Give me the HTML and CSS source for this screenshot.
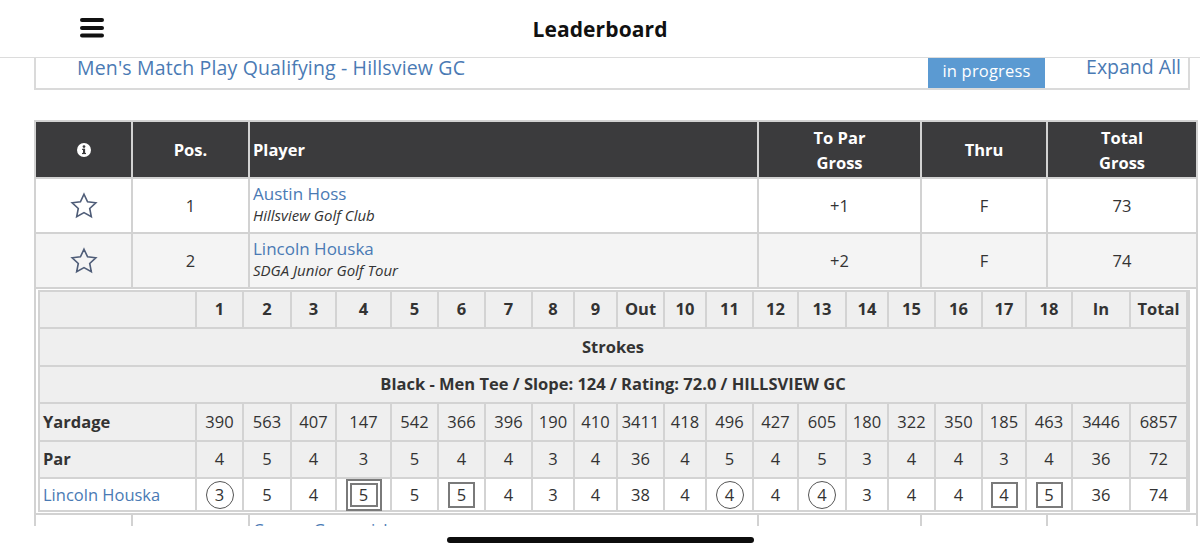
FILE: index.html
```html
<!DOCTYPE html>
<html lang="en">
<head>
<meta charset="utf-8">
<title>Leaderboard</title>
<link rel="stylesheet" href="styles.css">
</head>
<body>
<header class="topbar">
  <div class="topbar-left">
    <button class="menu-btn" aria-label="Menu">
      <svg width="24" height="20" viewBox="0 0 24 20"><rect x="0" y="0" width="24" height="4" rx="2"/><rect x="0" y="8" width="24" height="4" rx="2"/><rect x="0" y="15.5" width="24" height="4" rx="2"/></svg>
    </button>
  </div>
  <h1 class="page-title">Leaderboard</h1>
  <div class="topbar-right"></div>
</header>

<main class="content">
  <div class="event-bar">
    <a class="event-name" href="#">Men's Match Play Qualifying - Hillsview GC</a>
    <span class="status">in progress</span>
    <a class="expand" href="#">Expand All</a>
  </div>

  <table class="board">
    <colgroup>
      <col class="col-icon"><col class="col-pos"><col class="col-player"><col class="col-topar"><col class="col-thru"><col class="col-total">
    </colgroup>
    <thead>
      <tr>
        <th class="c">
          <svg class="info" width="14" height="14" viewBox="0 0 14 14"><circle cx="7" cy="7" r="7" fill="#fff"/><circle cx="7" cy="3.6" r="1.35" fill="#3b3b3d"/><rect x="6" y="5.8" width="2.1" height="5" fill="#3b3b3d"/><rect x="5" y="5.8" width="3" height="1.1" fill="#3b3b3d"/><rect x="5" y="9.9" width="4" height="1.2" fill="#3b3b3d"/></svg>
        </th>
        <th class="c">Pos.</th>
        <th class="l">Player</th>
        <th class="c">To Par<br>Gross</th>
        <th class="c">Thru</th>
        <th class="c">Total<br>Gross</th>
      </tr>
    </thead>
    <tbody>
      <tr class="player-row">
        <td class="c"><svg class="star" width="30" height="30" viewBox="0 0 24 24"><path d="M12 2.6l2.85 6.05 6.6.8-4.88 4.55 1.28 6.55L12 17.3l-5.85 3.25 1.28-6.55L2.55 9.45l6.6-.8z"/></svg></td>
        <td class="c">1</td>
        <td class="player"><a class="pname" href="#">Austin Hoss</a><span class="club">Hillsview Golf Club</span></td>
        <td class="c">+1</td>
        <td class="c">F</td>
        <td class="c">73</td>
      </tr>
      <tr class="player-row alt">
        <td class="c"><svg class="star" width="30" height="30" viewBox="0 0 24 24"><path d="M12 2.6l2.85 6.05 6.6.8-4.88 4.55 1.28 6.55L12 17.3l-5.85 3.25 1.28-6.55L2.55 9.45l6.6-.8z"/></svg></td>
        <td class="c">2</td>
        <td class="player"><a class="pname" href="#">Lincoln Houska</a><span class="club">SDGA Junior Golf Tour</span></td>
        <td class="c">+2</td>
        <td class="c">F</td>
        <td class="c">74</td>
      </tr>
      <tr class="card-row">
        <td colspan="6" class="card-cell">
          <div class="card">
            <div class="hd"></div>
            <div class="hd">1</div><div class="hd">2</div><div class="hd">3</div><div class="hd">4</div><div class="hd">5</div><div class="hd">6</div><div class="hd">7</div><div class="hd">8</div><div class="hd">9</div><div class="hd">Out</div>
            <div class="hd">10</div><div class="hd">11</div><div class="hd">12</div><div class="hd">13</div><div class="hd">14</div><div class="hd">15</div><div class="hd">16</div><div class="hd">17</div><div class="hd">18</div><div class="hd">In</div><div class="hd">Total</div>

            <div class="span hd">Strokes</div>
            <div class="span hd">Black - Men Tee / Slope: 124 / Rating: 72.0 / HILLSVIEW GC</div>

            <div class="label">Yardage</div>
            <div class="v">390</div><div class="v">563</div><div class="v">407</div><div class="v">147</div><div class="v">542</div><div class="v">366</div><div class="v">396</div><div class="v">190</div><div class="v">410</div><div class="v">3411</div>
            <div class="v">418</div><div class="v">496</div><div class="v">427</div><div class="v">605</div><div class="v">180</div><div class="v">322</div><div class="v">350</div><div class="v">185</div><div class="v">463</div><div class="v">3446</div><div class="v">6857</div>

            <div class="label">Par</div>
            <div class="v">4</div><div class="v">5</div><div class="v">4</div><div class="v">3</div><div class="v">5</div><div class="v">4</div><div class="v">4</div><div class="v">3</div><div class="v">4</div><div class="v">36</div>
            <div class="v">4</div><div class="v">5</div><div class="v">4</div><div class="v">5</div><div class="v">3</div><div class="v">4</div><div class="v">4</div><div class="v">3</div><div class="v">4</div><div class="v">36</div><div class="v">72</div>

            <div class="label score-name"><a href="#">Lincoln Houska</a></div>
            <div class="s"><span class="mark birdie">3</span></div><div class="s">5</div><div class="s">4</div><div class="s"><span class="mark double">5</span></div><div class="s">5</div><div class="s"><span class="mark bogey">5</span></div><div class="s">4</div><div class="s">3</div><div class="s">4</div><div class="s">38</div>
            <div class="s">4</div><div class="s"><span class="mark birdie">4</span></div><div class="s">4</div><div class="s"><span class="mark birdie">4</span></div><div class="s">3</div><div class="s">4</div><div class="s">4</div><div class="s"><span class="mark bogey">4</span></div><div class="s"><span class="mark bogey">5</span></div><div class="s">36</div><div class="s">74</div>
          </div>
        </td>
      </tr>
      <tr class="player-row">
        <td class="c"><svg class="star" width="30" height="30" viewBox="0 0 24 24"><path d="M12 2.6l2.85 6.05 6.6.8-4.88 4.55 1.28 6.55L12 17.3l-5.85 3.25 1.28-6.55L2.55 9.45l6.6-.8z"/></svg></td>
        <td class="c">3</td>
        <td class="player"><a class="pname" href="#">Carson Grosenick</a><span class="club">Hillsview Golf Club</span></td>
        <td class="c">+3</td>
        <td class="c">F</td>
        <td class="c">75</td>
      </tr>
    </tbody>
  </table>
</main>

<div class="home-bar"><span class="home-indicator"></span></div>
</body>
</html>
```

FILE: styles.css
```css
html, body {
  margin: 0;
  padding: 0;
  height: 100%;
  overflow: hidden;
  background: #fff;
  font-family: "Open Sans", "Liberation Sans", Arial, sans-serif;
  color: #333;
}

a { text-decoration: none; color: #4a7ab4; }

/* top bar */
.topbar {
  height: 57px;
  border-bottom: 1px solid #dcdcdc;
  display: grid;
  grid-template-columns: 1fr auto 1fr;
  align-items: center;
}
.topbar-left { padding-left: 80px; display: flex; align-items: center; }
.menu-btn {
  border: 0;
  background: none;
  padding: 0;
  margin-top: -1px;
  display: block;
  fill: #111;
}
.menu-btn svg { display: block; }
.page-title {
  margin: 0;
  font-size: 21px;
  font-weight: 700;
  color: #111;
  letter-spacing: 0.1px;
}

/* event bar */
.event-bar {
  margin: 0 10px 0 34px;
  height: 30px;
  border: 2px solid #dadada;
  border-top: 0;
  display: flex;
  align-items: flex-start;
}
.event-name {
  flex: 1;
  padding-left: 41px;
  font-size: 19.5px;
  letter-spacing: 0.15px;
  line-height: 20px;
}
.status {
  align-self: stretch;
  width: 117px;
  background: #5b9ad2;
  color: #fff;
  font-size: 16.5px;
  letter-spacing: 0.2px;
  display: flex;
  align-items: center;
  justify-content: center;
  padding-bottom: 6px;
  box-sizing: border-box;
}
.expand {
  margin-left: 41px;
  margin-right: 7px;
  font-size: 19.5px;
  line-height: 18px;
}

/* leaderboard table */
.board {
  margin: 30px 0 0 34px;
  width: 1162px;
  border-collapse: collapse;
  table-layout: fixed;
}
.col-icon { width: 97px; }
.col-pos { width: 117px; }
.col-player { width: 509px; }
.col-topar { width: 163px; }
.col-thru { width: 126px; }
.col-total { width: 150px; }

.board th, .board td {
  border: 2px solid #d2d2d2;
  padding: 0;
}
.board th {
  background: #3b3b3d;
  color: #fff;
  font-size: 16.5px;
  font-weight: 700;
  line-height: 25px;
  height: 55px;
}
.board th.l { text-align: left; padding-left: 3px; }
.board .c { text-align: center; }
.info { display: inline-block; vertical-align: middle; margin-top: -3px; }

.player-row td {
  height: 53px;
  font-size: 16.5px;
  color: #333;
}
.player-row.alt td { background: #f4f4f4; }
.star {
  display: inline-block;
  vertical-align: middle;
  fill: none;
  stroke: #4f5d78;
  stroke-width: 1.3;
  stroke-linejoin: miter;
}
.player { padding-left: 3px !important; vertical-align: middle; }
.pname { display: block; font-size: 17px; line-height: 22px; margin-top: -2px; }
.club { display: block; font-size: 15px; font-style: italic; line-height: 21px; color: #333; }

/* scorecard */
.board td.card-cell { padding: 1px 6px 1px 2px; }
.card {
  display: grid;
  grid-template-columns: 155px 45px 46px 43px 53px 45px 45px 45px 40px 41px 45px 40px 45px 43px 46px 40px 45px 45px 42px 44px 56px 55px;
  grid-template-rows: 35px 36px 35px 36px 35px 31px;
  gap: 2px;
  padding: 2px;
  background: #d3d3d3;
}
.card > div {
  background: #efefef;
  display: flex;
  align-items: center;
  justify-content: center;
  font-size: 16.5px;
  color: #333;
  padding-bottom: 2px;
}
.card .hd { font-weight: 700; }
.card .span { grid-column: 1 / -1; }
.card .label {
  justify-content: flex-start;
  padding-left: 3px;
  font-weight: 700;
}
.card .s { background: #fff; padding-bottom: 0; }
.card .score-name { background: #fff; font-weight: 400; padding-bottom: 0; }
.card .score-name a { color: #4a7ab4; }

.mark {
  display: flex;
  align-items: center;
  justify-content: center;
  box-sizing: border-box;
}
.birdie {
  width: 28px;
  height: 28px;
  border: 1.5px solid #555;
  border-radius: 50%;
}
.bogey {
  width: 27px;
  height: 26px;
  border: 2px solid #7a7a7a;
}
.double {
  width: 36px;
  height: 32px;
  border: 6px double #7a7a7a;
}

/* iOS home indicator area */
.home-bar {
  position: fixed;
  left: 0;
  right: 0;
  bottom: 0;
  height: 28px;
  background: #fff;
  display: flex;
  justify-content: center;
}
.home-indicator {
  margin-top: 11px;
  width: 307px;
  height: 6px;
  border-radius: 3px;
  background: #0d0d0d;
}
```
